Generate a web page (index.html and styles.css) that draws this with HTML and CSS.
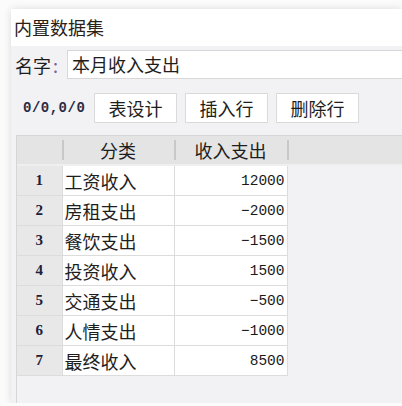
FILE: index.html
```html
<!DOCTYPE html>
<html lang="zh">
<head>
    <meta charset="UTF-8">
    <title>内置数据集</title>
    <link rel="stylesheet" href="styles.css">
</head>
<body>
    <div class="panel">
        <div class="title">内置数据集</div>
        <div class="body">
            <div class="name-row">
                <span class="label">名字<i>:</i></span>
                <div class="name-input">本月收入支出</div>
            </div>
            <div class="tools">
                <span class="counter">0/0,0/0</span>
                <button class="btn">表设计</button>
                <button class="btn">插入行</button>
                <button class="btn">删除行</button>
            </div>
            <div class="grid-box">
                <table class="grid">
                    <thead>
                        <tr>
                            <th class="no"></th>
                            <th class="cat">分类</th>
                            <th class="val">收入支出</th>
                            <th class="rest"></th>
                        </tr>
                    </thead>
                    <tbody>
                        <tr><td class="no">1</td><td class="cat">工资收入</td><td class="val">12000</td><td class="rest"></td></tr>
                        <tr><td class="no">2</td><td class="cat">房租支出</td><td class="val">&minus;2000</td><td class="rest"></td></tr>
                        <tr><td class="no">3</td><td class="cat">餐饮支出</td><td class="val">&minus;1500</td><td class="rest"></td></tr>
                        <tr><td class="no">4</td><td class="cat">投资收入</td><td class="val">1500</td><td class="rest"></td></tr>
                        <tr><td class="no">5</td><td class="cat">交通支出</td><td class="val">&minus;500</td><td class="rest"></td></tr>
                        <tr><td class="no">6</td><td class="cat">人情支出</td><td class="val">&minus;1000</td><td class="rest"></td></tr>
                        <tr><td class="no">7</td><td class="cat">最终收入</td><td class="val">8500</td><td class="rest"></td></tr>
                    </tbody>
                </table>
            </div>
        </div>
    </div>
</body>
</html>
```

FILE: styles.css
```css
body{
    margin: 0;
    padding: 9px 0 0 11px;
    background: #fbfbfb;
    font-family: "Noto Sans CJK SC", "Noto Sans", sans-serif;
    color: #1e1e1e;
    overflow: hidden;
}

.panel{
    height: 394px;
    background: #f2f2f4;
    box-shadow: 0 0 8px rgba(0,0,0,0.13);
}

.title{
    height: 37px;
    line-height: 36px;
    padding-left: 3px;
    background: #fff;
    font-size: 18px;
    color: #2a2218;
}

.body{
    padding: 4px 0 0 4px;
}

/* name row */
.name-row{
    display: flex;
    align-items: center;
    height: 29px;
}
.label{
    width: 52px;
    font-size: 18px;
}
.label i{
    font-style: normal;
    color: #7a5a9a;
    padding-left: 2px;
}
.name-input{
    flex: 1;
    height: 27px;
    line-height: 26px;
    padding-left: 4px;
    background: #fff;
    border: 1px solid #d8d8d8;
    border-right: none;
    font-size: 18px;
}

/* toolbar */
.tools{
    display: flex;
    align-items: center;
    gap: 8px;
    margin-top: 14px;
    height: 30px;
}
.counter{
    width: 63px;
    padding-left: 8px;
    font-family: "Liberation Mono", monospace;
    font-weight: bold;
    font-size: 14px;
    color: #2a2a44;
    letter-spacing: 0.5px;
}
.btn{
    width: 83px;
    height: 30px;
    padding: 0;
    background: #fff;
    border: 1px solid #dadada;
    font-family: inherit;
    font-size: 18px;
    color: #1e1e1e;
}

/* table */
.grid-box{
    margin: 12px 0 0 1px;
    height: 267px;
    border: 1px solid #d6d6d6;
    border-right: none;
}
.grid{
    border-collapse: collapse;
    width: 100%;
    table-layout: fixed;
}
.grid th{
    height: 28px;
    padding: 0;
    background: #e4e4e4;
    font-weight: normal;
    font-size: 18px;
    line-height: 28px;
    border-bottom: 2px solid #efefef;
}
.grid th.cat,
.grid th.val,
.grid th.rest{
    background-image: linear-gradient(#c8c8c8, #c8c8c8);
    background-repeat: no-repeat;
    background-size: 2px 20px;
    background-position: 0 4px;
}
.grid td{
    height: 29px;
    padding: 0;
    font-size: 18px;
    border: 1px solid #dcdcdc;
}
.grid .no{ width: 45px; }
.grid .cat{ width: 112px; }
.grid .val{ width: 113px; }

.grid td.no{
    background: #e8e8e8;
    border-left: none;
    text-align: center;
    font-family: "Liberation Serif", serif;
    font-weight: bold;
    font-size: 15px;
    color: #20203a;
}
.grid td.cat{
    background: #fff;
    padding-left: 2px;
}
.grid td.val{
    background: #fff;
    text-align: right;
    padding-right: 2px;
    font-family: "Liberation Mono", monospace;
    font-size: 14.5px;
    color: #1a1a1a;
}
.grid td.rest{
    border: none;
    border-left: 1px solid #dcdcdc;
    background: transparent;
}
```
